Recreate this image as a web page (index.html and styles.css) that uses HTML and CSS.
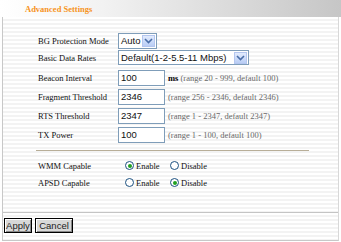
FILE: index.html
```html
<!DOCTYPE html>
<html>
<head>
<meta charset="utf-8">
<link rel="stylesheet" href="styles.css">
</head>
<body>
<div class="page">
  <div class="header"><span class="title">Advanced Settings</span></div>
  <div class="body">
    <div class="form">
      <div class="row r1">
        <span class="label">BG Protection Mode</span>
        <span class="select small">Auto<span class="arrow"><svg width="9" height="6" viewBox="0 0 9 6"><path d="M1 1 L4.5 4.5 L8 1" fill="none" stroke="#4a6ea8" stroke-width="1.6"/></svg></span></span>
      </div>
      <div class="row r2">
        <span class="label">Basic Data Rates</span>
        <span class="select wide">Default(1-2-5.5-11 Mbps)<span class="arrow"><svg width="9" height="6" viewBox="0 0 9 6"><path d="M1 1 L4.5 4.5 L8 1" fill="none" stroke="#4a6ea8" stroke-width="1.6"/></svg></span></span>
      </div>
      <div class="row">
        <span class="label">Beacon Interval</span>
        <span class="input">100</span>
        <span class="hint"><b>ms</b> (range 20 - 999, default 100)</span>
      </div>
      <div class="row">
        <span class="label">Fragment Threshold</span>
        <span class="input">2346</span>
        <span class="hint">(range 256 - 2346, default 2346)</span>
      </div>
      <div class="row">
        <span class="label">RTS Threshold</span>
        <span class="input">2347</span>
        <span class="hint">(range 1 - 2347, default 2347)</span>
      </div>
      <div class="row">
        <span class="label">TX Power</span>
        <span class="input">100</span>
        <span class="hint">(range 1 - 100, default 100)</span>
      </div>
      <div class="sep"></div>
      <div class="row rr">
        <span class="label">WMM Capable</span>
        <span class="radio on"></span><span class="rlabel">Enable</span>
        <span class="radio"></span><span class="rlabel">Disable</span>
      </div>
      <div class="row rr">
        <span class="label">APSD Capable</span>
        <span class="radio"></span><span class="rlabel">Enable</span>
        <span class="radio on"></span><span class="rlabel">Disable</span>
      </div>
    </div>
    <div class="footer">
      <span class="btn apply">Apply</span><span class="btn cancel">Cancel</span>
    </div>
  </div>
</div>
</body>
</html>
```
FILE: styles.css
```css
html, body {
  margin: 0;
  padding: 0;
  background: #ffffff;
}
.page {
  width: 341px;
  height: 242px;
  overflow: hidden;
  font-family: "Liberation Serif", "Times New Roman", serif;
  color: #000;
}
.header {
  height: 17px;
  background: linear-gradient(to right, #ffffff 0%, #f2f2f2 30%, #d6d6d6 75%, #c6c6c6 100%);
  display: flex;
  align-items: center;
  padding-left: 25px;
  box-sizing: border-box;
}
.title {
  color: #f7941d;
  font-weight: bold;
  font-size: 8.5px;
}
.body {
  height: 223px;
  margin: 0 2px 2px 2px;
  border-left: 1px solid #c8c8c8;
  border-right: 1px solid #d8d8d8;
  border-bottom: 1px solid #c8c8c8;
  background: repeating-linear-gradient(to bottom, #ffffff 0px, #ffffff 2px, #f3f3f3 2px, #f3f3f3 4px);
  display: flex;
  flex-direction: column;
}
.form {
  padding-top: 15px;
  padding-left: 35px;
  height: 196px;
  box-sizing: border-box;
  border-bottom: 1px solid #c4c4c4;
}
.row {
  display: flex;
  align-items: center;
  height: 19px;
  font-size: 8.5px;
  color: #111;
}
.row.r1 { height: 17px; }
.row.r2 { height: 17px; margin-bottom: 2px; }
.label {
  width: 80px;
  flex: none;
}
.select {
  display: flex;
  align-items: center;
  box-sizing: border-box;
  height: 16px;
  border: 1px solid #7f9db9;
  background: #fff;
  font-family: "Liberation Sans", Arial, sans-serif;
  font-size: 9.5px;
  padding-left: 2px;
}
.select.small { width: 39px; }
.select.wide { width: 131px; height: 15px; }
.arrow {
  margin-left: auto;
  width: 13px;
  height: 12px;
  margin-right: 1px;
  background: linear-gradient(to bottom, #e2ebfd, #b9cdf5);
  border: 1px solid #b4c6ef;
  box-sizing: border-box;
  display: flex;
  align-items: center;
  justify-content: center;
}
.input {
  box-sizing: border-box;
  width: 47px;
  height: 16px;
  border: 1px solid #7f9db9;
  background: #fff;
  font-family: "Liberation Sans", Arial, sans-serif;
  font-size: 9.5px;
  padding-left: 2px;
  display: flex;
  align-items: center;
  flex: none;
}
.hint {
  margin-left: 3px;
  font-size: 8.5px;
  color: #6a6a6a;
}
.hint b { color: #000; }
.sep {
  width: 273px;
  height: 1px;
  background: #b8ae98;
  margin: 6px 0 6px -2px;
}
.rr { height: 17px; }
.radio {
  width: 9px;
  height: 9px;
  border: 1px solid #1c5180;
  border-radius: 50%;
  background: #fff;
  box-sizing: border-box;
  flex: none;
  margin-left: 7px;
  position: relative;
}
.radio.on::after {
  content: "";
  position: absolute;
  left: 1.5px;
  top: 1.5px;
  width: 4px;
  height: 4px;
  border-radius: 50%;
  background: #21a121;
}
.rlabel {
  margin-left: 2px;
  font-size: 8.5px;
  width: 34px;
}
.rlabel + .radio { margin-left: 0; }
.footer {
  display: flex;
  gap: 3px;
  padding-top: 5px;
  padding-left: 1px;
}
.btn {
  box-sizing: border-box;
  height: 15px;
  border: 1px solid #000;
  background: #d8d8d8;
  box-shadow: inset 1px 1px 0 #fff, inset -1px -1px 0 #888;
  font-family: "Liberation Sans", Arial, sans-serif;
  font-size: 9.5px;
  color: #222;
  display: flex;
  align-items: center;
  justify-content: center;
}
.apply { width: 28px; }
.cancel { width: 38px; }
```
